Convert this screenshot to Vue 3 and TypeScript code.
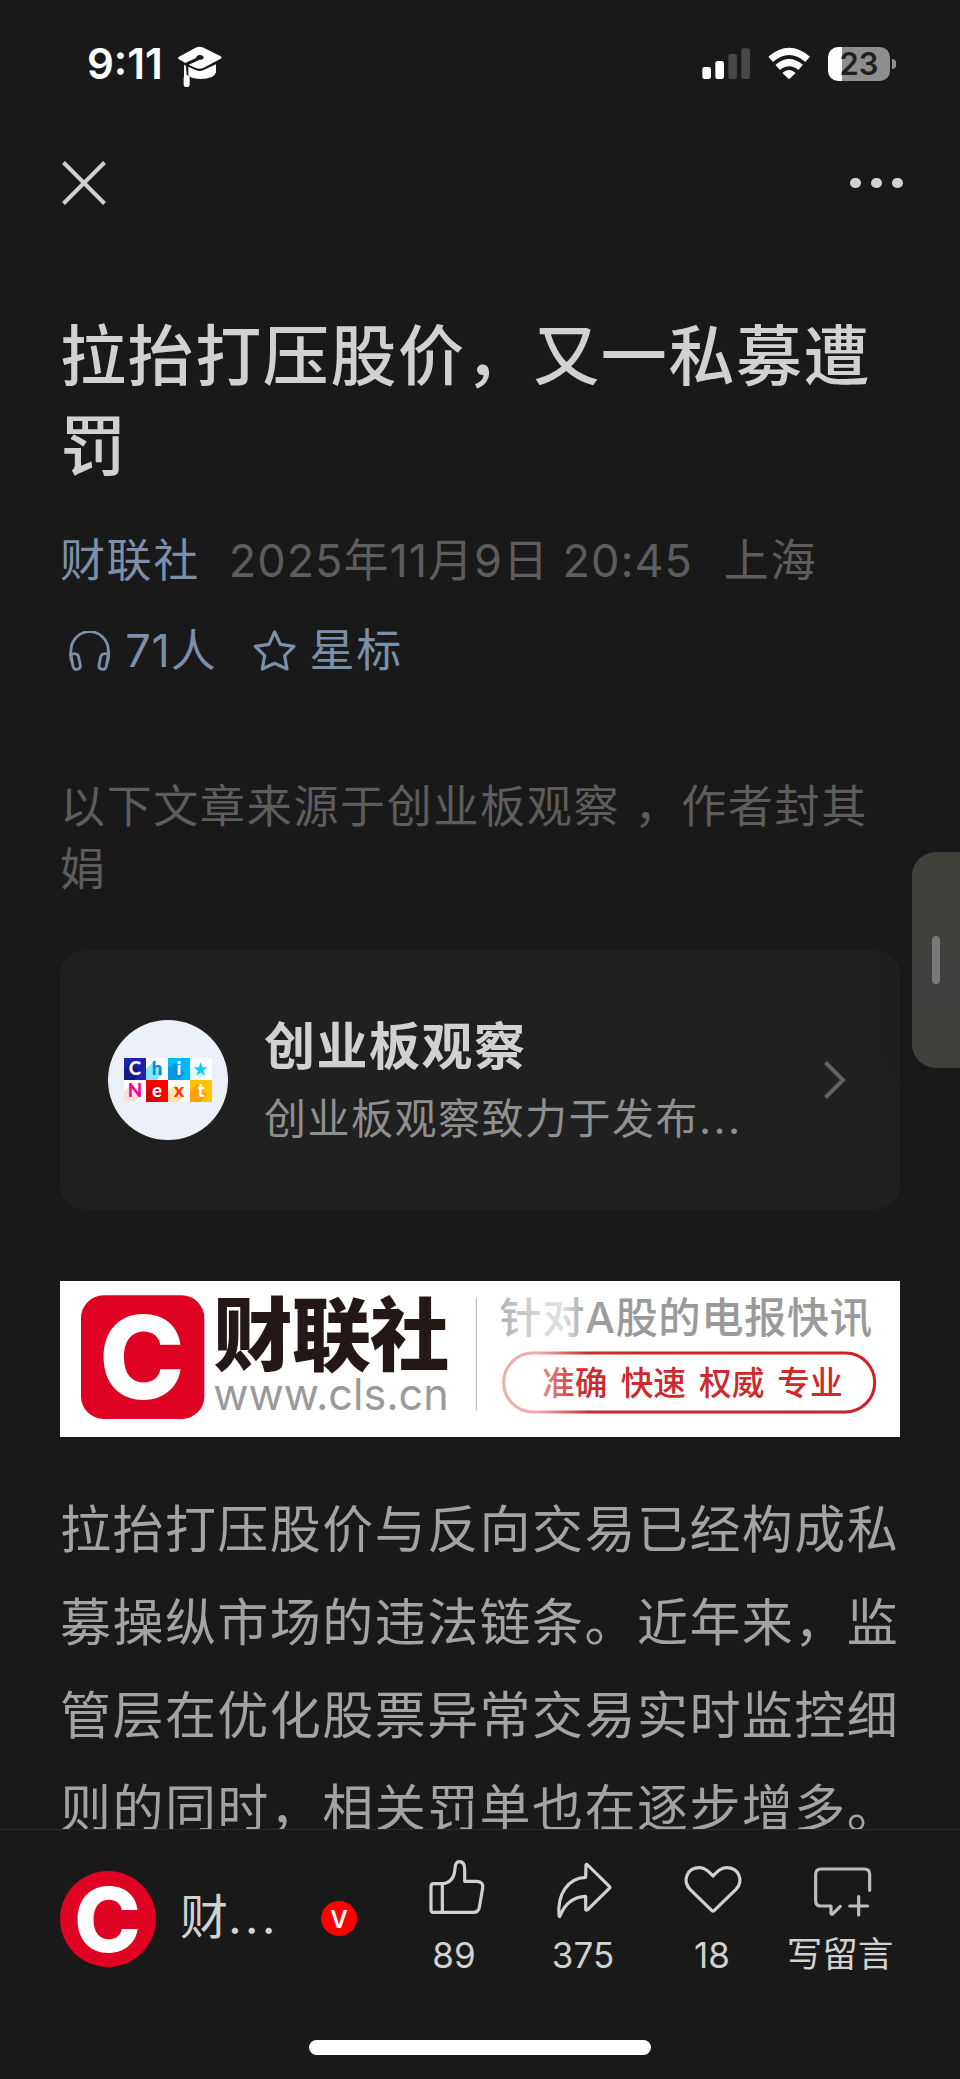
<script setup lang="ts">
interface Tile {
  ch: string
  bg: string
  shade: string
  fg: string
  x: number
  y: number
}

const title = '拉抬打压股价，又一私募遭罚'
const lines: string[] = [
  '拉抬打压股价与反向交易已经构成私',
  '募操纵市场的违法链条。近年来，监',
  '管层在优化股票异常交易实时监控细',
  '则的同时，相关罚单也在逐步增多。',
]

const tiles: Tile[] = [
  { ch: 'C', bg: '#1b22b4', shade: '#171a86', fg: '#fff', x: 252, y: 894 },
  { ch: 'h', bg: '#ffffff', shade: '#80e6ff', fg: '#0a86c8', x: 318, y: 894 },
  { ch: 'i', bg: '#00b8ff', shade: '#0297e2', fg: '#fff', x: 384, y: 894 },
  { ch: '', bg: '#ffffff', shade: '#e4fbff', fg: '#00d0ff', x: 450, y: 894 },
  { ch: 'N', bg: '#ffffff', shade: '#ffe0d8', fg: '#ff0096', x: 252, y: 960 },
  { ch: 'e', bg: '#ff0000', shade: '#d80000', fg: '#fff', x: 318, y: 960 },
  { ch: 'x', bg: '#ffffff', shade: '#ffdfae', fg: '#f43a00', x: 384, y: 960 },
  { ch: 't', bg: '#ffc400', shade: '#ffa000', fg: '#fff', x: 450, y: 960 },
]

const slogans = [
  { text: '准确', x: 1476 },
  { text: '快速', x: 1712 },
  { text: '权威', x: 1947 },
  { text: '专业', x: 2182 },
]
</script>

<template>
  <div class="page">
    <header class="status">
      <span class="time">9:11</span>
      <svg class="cap" viewBox="412 78 138 129" fill="#fff">
        <path d="M418 113 L468 86 Q480 80 492 86 L543 112 Q549 116 543 119 L492 146 Q480 152 468 147 L447 137 L480 122 Q492 123 492 115 Q490 108 480 108 Q470 109 469 117 L437 132 L418 121 Q412 117 418 113 Z" />
        <path d="M446 143 L468 153 Q480 159 492 153 L529 136 V160 Q524 180 482 180 Q450 178 446 168 Z" />
        <path d="M433 137 L439 141 L441 170 L433 172 Z" />
        <rect x="432" y="169" width="18" height="35" rx="7" />
      </svg>
      <span class="grow"></span>
      <svg class="signal" viewBox="126 84 145 94">
        <rect x="127" y="141" width="26" height="36" rx="7" fill="#fff" />
        <rect x="166" y="123" width="26" height="54" rx="7" fill="#fff" />
        <rect x="205" y="102" width="26" height="75" rx="7" fill="#484848" />
        <rect x="244" y="85" width="26" height="92" rx="7" fill="#484848" />
      </svg>
      <svg class="wifi" viewBox="324 81 127 98">
        <g fill="none" stroke="#fff" stroke-width="21">
          <path d="M332 118 Q387.500 70 443 118" />
          <path d="M353 142 Q387.500 114 422 142" />
        </g>
        <path d="M367 159 Q387 141 407 159 L387.500 178 Z" fill="#fff" />
      </svg>
      <div class="battery">
        <div class="cell"><b>23</b></div>
        <i></i>
      </div>
    </header>

    <nav class="nav">
      <svg class="close" viewBox="0 0 44 44"><path d="M1.500 1.500 L42.500 42.500 M42.500 1.500 L1.500 42.500" stroke="#d0d0d0" stroke-width="4" /></svg>
      <div class="dots"><i></i><i></i><i></i></div>
    </nav>

    <main class="article">
      <h1>{{ title }}</h1>
      <div class="meta">
        <span class="link">财联社</span>
        <span class="date">2025年11月9日 20:45</span>
        <span>上海</span>
      </div>
      <div class="meta link stats">
        <svg class="phones" viewBox="88 988 124 120" fill="none" stroke="#7d90a9" stroke-width="8.500">
          <path d="M98 1084 C90 1066 93 1052 94 1046 A56 56 0 0 1 206 1046 C208 1055 209 1066 202 1084" />
          <path d="M94 1060 Q97 1055 105 1056 Q115 1057 117 1066 L122 1091 Q123 1101 113 1103 Q103 1105 100 1094 Z" />
          <path d="M206 1060 Q203 1055 195 1056 Q185 1057 183 1066 L178 1091 Q177 1101 187 1103 Q197 1105 200 1094 Z" />
        </svg>
        <span class="count">71人</span>
        <svg class="star" viewBox="640 986 130 124" fill="none" stroke="#7d90a9" stroke-width="9.500" stroke-linejoin="round">
          <path d="M705 992 L722 1029 L763 1035 L735 1063 L742 1103 L705 1086 L668 1103 L675 1063 L647 1035 L688 1029 Z" />
        </svg>
        <span>星标</span>
      </div>

      <p class="source">以下文章来源于创业板观察 ，作者封其娟</p>

      <section class="card">
        <svg class="avatar" viewBox="204 780 360 360">
          <circle cx="384" cy="960" r="180" fill="#ecf1f9" />
          <g v-for="t in tiles" :key="t.x + '-' + t.y">
            <rect :x="t.x" :y="t.y" width="66" height="66" :fill="t.bg" />
            <path :d="`M${t.x} ${t.y + 33} L${t.x + 22} ${t.y + 12} L${t.x + 50} ${t.y + 46} L${t.x + 32} ${t.y + 66} H${t.x} Z`" :fill="t.shade" />
            <text v-if="t.ch" :x="t.x + 33" :y="t.y + 52" :fill="t.fg" class="tile-text">{{ t.ch }}</text>
            <path v-else d="M482 907 L487 922 H502 L490 932 L495 947 L482 938 L469 947 L474 932 L462 922 H477 Z" :fill="t.fg" />
          </g>
        </svg>
        <div class="card-text">
          <strong>创业板观察</strong>
          <span>创业板观察致力于发布<em>...</em></span>
        </div>
        <svg class="chevron" viewBox="0 0 22 38"><path d="M1.500 1.500 L19 19 L1.500 36.500" fill="none" stroke="#626262" stroke-width="4" /></svg>
      </section>

      <svg class="banner" viewBox="30 33 2520 468">
        <defs>
          <linearGradient id="greyFade" gradientUnits="userSpaceOnUse" x1="1352" y1="0" x2="2462" y2="0">
            <stop offset="0" stop-color="#b2b2b2" />
            <stop offset="0.12" stop-color="#dcdcdc" />
            <stop offset="0.17" stop-color="#dedede" />
            <stop offset="0.23" stop-color="#a4a4a4" />
            <stop offset="0.3" stop-color="#9a9a9a" />
          </linearGradient>
          <linearGradient id="redFade" gradientUnits="userSpaceOnUse" x1="1357" y1="0" x2="2478" y2="0">
            <stop offset="0" stop-color="#efaeae" />
            <stop offset="0.1" stop-color="#edaaaa" />
            <stop offset="0.23" stop-color="#cc2a2c" />
            <stop offset="1" stop-color="#cc2226" />
          </linearGradient>
          <linearGradient id="wordFade" gradientUnits="userSpaceOnUse" x1="1479" y1="0" x2="1600" y2="0">
            <stop offset="0" stop-color="#e58a8a" />
            <stop offset="1" stop-color="#cc2a2c" />
          </linearGradient>
        </defs>
        <rect x="30" y="33" width="2520" height="468" fill="#fff" />
        <rect x="93" y="76" width="370" height="371" rx="68" fill="#df0222" />
        <text class="logo-c" x="276" y="388">C</text>
        <text class="logo-name" x="490" y="283" textLength="708">财联社</text>
        <text class="logo-url" x="490" y="421" textLength="706" lengthAdjust="spacingAndGlyphs">www.cls.cn</text>
        <path d="M1279 83 V422" stroke="#b4b4b4" stroke-width="3" />
        <text class="tagline" x="1348" y="190" fill="url(#greyFade)" textLength="1118">针对A股的电报快讯</text>
        <rect x="1361" y="249" width="1113" height="177" rx="88" fill="none" stroke="url(#redFade)" stroke-width="9" />
        <text v-for="(s, i) in slogans" :key="s.text" class="slogan" :x="s.x" y="376" :fill="i === 0 ? 'url(#wordFade)' : '#cc2a2c'" textLength="196">{{ s.text }}</text>
      </svg>

      <div class="body">
        <div v-for="l in lines" :key="l">{{ l }}</div>
      </div>
    </main>

    <footer class="bar">
      <div class="bar-row">
        <svg class="bar-avatar" viewBox="0 0 96 96">
          <circle cx="48" cy="48" r="48" fill="#df0222" />
          <text class="bar-c" x="47.500" y="81">C</text>
        </svg>
        <span class="bar-name">财<em>...</em></span>
        <span class="badge">V</span>
        <div class="actions">
          <div class="action">
            <svg viewBox="1134 96 216 216">
              <path d="M1181 191 H1208 C1236 188 1244 165 1245 145 C1246 131 1249 125 1258 125 C1270 125 1274 136 1274 148 V184 H1311 Q1331 185 1328 204 L1318 262 Q1315 277 1300 277 H1181 Q1173 277 1173 269 V199 Q1173 191 1181 191 Z M1207 191 V277" />
            </svg>
            <span>89</span>
          </div>
          <div class="action">
            <svg viewBox="201 96 216 216">
              <path d="M318 134 Q319 131 323 135 L388 199 Q391 202 388 205 L323 269 Q318 272 317 268 V229 C285 230 257 245 240 288 Q238 292 237 286 C232 225 262 174 317 172 Z" />
            </svg>
            <span>375</span>
          </div>
          <div class="action">
            <svg viewBox="588 96 216 216">
              <path d="M695 271 L630 208 C606 182 621 143 658 143 C676 143 687 155 699 168 C711 155 722 143 740 143 C777 143 792 182 768 208 L703 271 Q699 275 695 271 Z" />
            </svg>
            <span>18</span>
          </div>
          <div class="action">
            <svg viewBox="977 96 216 216" class="dim">
              <path d="M1171 211 V163 Q1171 147 1155 147 H1025 Q1009 147 1009 163 V242 Q1009 258 1025 258 H1055 V280 Q1056 285 1061 281 L1083 259 M1138 230 V285 M1111 258 H1165" />
            </svg>
            <span class="wide">写留言</span>
          </div>
        </div>
      </div>
      <div class="home"></div>
    </footer>

    <div class="side-tab"><i></i></div>
  </div>
</template>

<style>
body {
  background: #191919;
}
</style>

<style scoped>
.page {
  position: relative;
  display: flex;
  flex-direction: column;
  width: 960px;
  height: 2079px;
  overflow: hidden;
  background: #191919;
  color: #d1d1d1;
  font-family: Inter, 'Noto Sans CJK SC', sans-serif;
}
svg {
  display: block;
  flex: none;
}
.status {
  display: flex;
  align-items: center;
  height: 88px;
  padding: 39px 64px 0 87px;
  box-sizing: border-box;
}
.time {
  width: 90px;
  color: #fff;
  font-size: 42px;
  font-weight: 600;
  line-height: 50px;
  white-space: nowrap;
}
.cap {
  width: 46px;
  height: 43px;
  margin-top: 6px;
}
.grow {
  flex: 1;
}
.signal {
  width: 48.300px;
  height: 31.300px;
  margin-right: 17.700px;
}
.wifi {
  width: 42.300px;
  height: 32.700px;
  margin-right: 17.700px;
}
.battery {
  display: flex;
  align-items: center;
  gap: 2px;
}
.cell {
  width: 62px;
  height: 34px;
  border-radius: 10px;
  background: linear-gradient(to right, #fff 14px, #8e8e8e 14px);
}
.cell b {
  display: block;
  color: #1f1f1f;
  font-size: 31px;
  font-weight: 600;
  line-height: 34px;
  text-align: center;
}
.battery i {
  width: 4px;
  height: 10px;
  border-radius: 0 5px 5px 0;
  background: #8e8e8e;
}
.nav {
  display: flex;
  justify-content: space-between;
  align-items: center;
  height: 190px;
  padding: 0 57.500px 0 62px;
}
.close {
  width: 44px;
  height: 44px;
}
.dots {
  display: flex;
  gap: 10.400px;
}
.dots i {
  width: 10.600px;
  height: 10.600px;
  border-radius: 50%;
  background: #d1d1d1;
}
.article {
  flex: 1;
  min-height: 0;
  overflow: hidden;
  padding: 33px 60px 0;
}
h1 {
  margin: 0;
  font-size: 66px;
  font-weight: 500;
  line-height: 90px;
  letter-spacing: 1.600px;
}
.meta {
  display: flex;
  align-items: center;
  height: 90px;
  margin-top: 25px;
  color: #5d5d5d;
  font-size: 45px;
  letter-spacing: 1.600px;
  line-height: 90px;
  white-space: nowrap;
}
.meta .date {
  width: 495px;
  margin: 0 0 0 29px;
  letter-spacing: 1px;
}
.link,
.meta.link {
  color: #7d90a9;
}
.stats {
  margin-top: 0;
  padding-left: 9px;
}
.phones {
  width: 41.300px;
  height: 40px;
}
.count {
  width: 128px;
  margin-left: 15px;
  letter-spacing: 0.800px;
}
.star {
  width: 43.300px;
  height: 41.300px;
  margin-right: 13px;
}
.source {
  margin: 79px 0 0;
  color: #5d5d5d;
  font-size: 45px;
  line-height: 63px;
  letter-spacing: 1.680px;
}
.card {
  display: flex;
  align-items: center;
  height: 258px;
  margin-top: 50px;
  padding: 0 54px 0 48px;
  box-sizing: border-box;
  border-radius: 24px;
  background: #202020;
}
.avatar {
  width: 120px;
  height: 120px;
}
.tile-text {
  font-family: Lato, sans-serif;
  font-size: 56px;
  font-weight: 900;
  text-anchor: middle;
}
.card-text {
  flex: 1;
  display: flex;
  flex-direction: column;
  margin: 6px 0 0 36px;
  white-space: nowrap;
}
.card-text strong {
  font-size: 51px;
  font-weight: 700;
  line-height: 72px;
  letter-spacing: 1.500px;
}
.card-text span {
  color: #8f8f8f;
  font-size: 42px;
  line-height: 72px;
  letter-spacing: 1.500px;
}
.card-text em {
  font-style: normal;
  letter-spacing: 2.400px;
}
.chevron {
  width: 22px;
  height: 38px;
}
.banner {
  width: 840px;
  height: 156px;
  margin-top: 72px;
}
.logo-c,
.bar-c {
  font-weight: 800;
  fill: #fff;
  text-anchor: middle;
}
.logo-c {
  font-size: 346px;
}
.logo-name {
  font-size: 238px;
  font-weight: 900;
  fill: #231815;
}
.logo-url {
  font-size: 130px;
  font-weight: 400;
  fill: #9a9a9a;
}
.tagline {
  font-size: 127px;
  font-weight: 500;
}
.slogan {
  font-size: 98px;
  font-weight: 500;
}
.body {
  margin-top: 46px;
  color: #a3a3a3;
  font-size: 51px;
  line-height: 93px;
  letter-spacing: 1.450px;
  white-space: nowrap;
}
.bar {
  flex: none;
  height: 250px;
  box-sizing: border-box;
  border-top: 1px solid #2c2c2c;
  background: #191919;
}
.bar-row {
  display: flex;
  align-items: flex-start;
  height: 210px;
  padding-left: 60px;
  box-sizing: border-box;
}
.bar-avatar {
  width: 96px;
  height: 96px;
  margin-top: 41px;
}
.bar-c {
  font-size: 90px;
}
.bar-name {
  width: 141px;
  margin: 52px 0 0 24px;
  font-size: 48px;
  line-height: 70px;
  white-space: nowrap;
}
.bar-name em {
  font-style: normal;
  letter-spacing: 3px;
}
.badge {
  width: 36px;
  height: 35px;
  margin-top: 71px;
  border-radius: 50%;
  background: #ff0000;
  color: #fff;
  font-size: 24px;
  font-weight: 600;
  line-height: 37px;
  text-align: center;
}
.actions {
  display: flex;
  margin: 22px 0 0 32.500px;
}
.action {
  display: flex;
  flex-direction: column;
  align-items: center;
  width: 129px;
}
.action svg {
  width: 72px;
  height: 72px;
  fill: none;
  stroke: #d1d1d1;
  stroke-width: 9.500;
  stroke-linecap: round;
  stroke-linejoin: round;
}
.action svg.dim {
  stroke: #bdbdbd;
}
.action span {
  margin-top: 7px;
  font-size: 35px;
  line-height: 48px;
  white-space: nowrap;
}
.action .wide {
  margin-left: -2px;
  font-size: 35.500px;
}
.home {
  width: 342px;
  height: 15px;
  margin-left: 309px;
  border-radius: 8px;
  background: #fff;
}
.side-tab {
  position: absolute;
  top: 852px;
  right: 0;
  display: flex;
  align-items: center;
  width: 48px;
  height: 216px;
  padding-left: 20px;
  box-sizing: border-box;
  border-radius: 24px 0 0 24px;
  background: linear-gradient(#413f3a, #40403c 30%, #3f3f3e 55%, #403f3b);
  box-shadow: 0 0 45px rgba(0, 0, 0, 0.080);
}
.side-tab i {
  width: 8px;
  height: 48px;
  border-radius: 4px;
  background: #7a7a7a;
}
</style>
